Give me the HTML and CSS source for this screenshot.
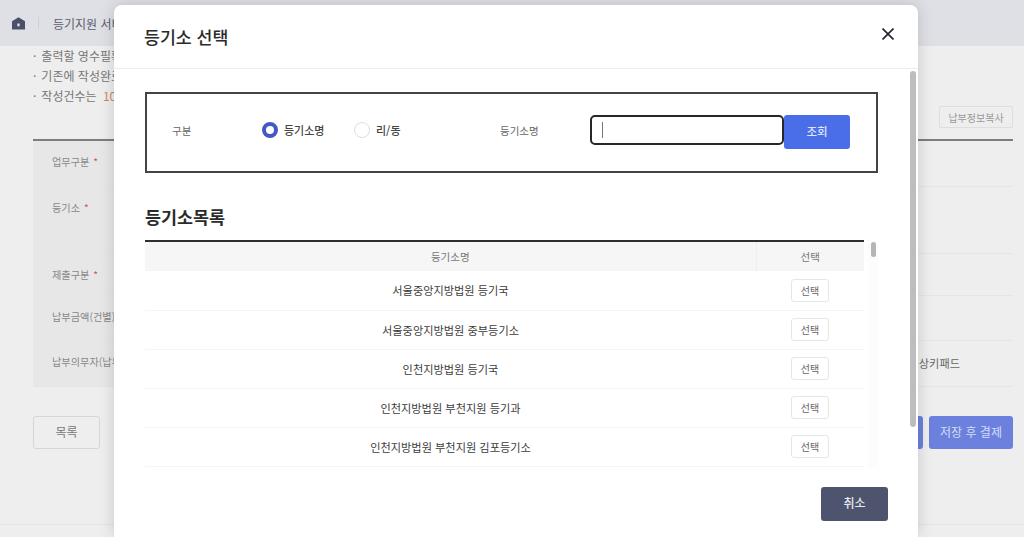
FILE: index.html
```html
<!DOCTYPE html>
<html lang="ko">
<head>
<meta charset="utf-8">
<title>등기소 선택</title>
<link rel="stylesheet" href="styles.css">
</head>
<body>
<div class="page">
  <header class="topbar">
    <svg class="home" viewBox="0 0 16 14" width="15" height="13"><path d="M8 0.3 L15 4.6 V13.4 H1 V4.6 Z" fill="#4b5068"/><rect x="6.8" y="7" width="2.4" height="3" fill="#e6e7ec"/></svg>
    <span class="sep"></span>
    <span class="crumb">등기지원 서비스</span>
  </header>
  <ul class="notes">
    <li>출력할 영수필확인서를 선택하세요.</li>
    <li>기존에 작성완료된 내역입니다.</li>
    <li>작성건수는 <em>10</em>건입니다.</li>
  </ul>
  <div class="copy-row"><button class="copy">납부정보복사</button></div>
  <div class="form">
    <div class="frow h46"><div class="lab">업무구분 <i>*</i></div><div class="val"></div></div>
    <div class="frow h67"><div class="lab">등기소 <i>*</i></div><div class="val"></div></div>
    <div class="frow h42"><div class="lab">제출구분 <i>*</i></div><div class="val"></div></div>
    <div class="frow h45"><div class="lab">납부금액(건별)</div><div class="val"></div></div>
    <div class="frow h46"><div class="lab">납부의무자(납부자)</div><div class="val"><span class="keypad">상키패드</span></div></div>
  </div>
  <div class="actions">
    <button class="list-btn">목록</button>
    <div class="right-btns"><button class="save">저장</button><button class="save">저장 후 결제</button></div>
  </div>
  <div class="foot"></div>
</div>

<div class="modal">
  <div class="m-head">
    <h2>등기소 선택</h2>
    <svg class="close" viewBox="0 0 12 12" width="12" height="12"><path d="M0.5 0.5 L11.5 11.5 M11.5 0.5 L0.5 11.5" stroke="#20232e" stroke-width="1.6" fill="none"/></svg>
  </div>
  <div class="m-body">
    <div class="filter">
      <span class="f-label">구분</span>
      <div class="radios">
        <span class="radio"><span class="dot on"></span><span>등기소명</span></span>
        <span class="radio"><span class="dot"></span><span>리/동</span></span>
      </div>
      <span class="f-label name">등기소명</span>
      <div class="input"><span class="caret"></span></div>
      <button class="search">조회</button>
    </div>
    <h3>등기소목록</h3>
    <div class="list-wrap">
      <table class="list">
        <thead><tr><th>등기소명</th><th class="c2">선택</th></tr></thead>
        <tbody>
          <tr><td>서울중앙지방법원 등기국</td><td class="c2"><button class="pick">선택</button></td></tr>
          <tr><td>서울중앙지방법원 중부등기소</td><td class="c2"><button class="pick">선택</button></td></tr>
          <tr><td>인천지방법원 등기국</td><td class="c2"><button class="pick">선택</button></td></tr>
          <tr><td>인천지방법원 부천지원 등기과</td><td class="c2"><button class="pick">선택</button></td></tr>
          <tr><td>인천지방법원 부천지원 김포등기소</td><td class="c2"><button class="pick">선택</button></td></tr>
        </tbody>
      </table>
      <div class="track"><span class="thumb"></span></div>
    </div>
    <div class="m-foot"><button class="cancel">취소</button></div>
    <span class="body-thumb"></span>
  </div>
</div>
</body>
</html>
```
FILE: styles.css
```css
* { box-sizing: border-box; }
html, body { margin: 0; height: 537px; overflow: hidden; }
body { background: #eeeeee; font-family: "Noto Sans CJK KR", "Noto Sans", sans-serif; color: #777; }
button { font-family: inherit; cursor: pointer; }

.page { height: 537px; display: flex; flex-direction: column; overflow: hidden; }
.topbar { height: 46px; background: #dfe0e6; display: flex; align-items: center; padding-left: 11px; flex: none; }
.home { display: block; }
.sep { width: 1px; height: 12px; background: #cfd0d6; margin: 0 14px 0 12px; }
.crumb { font-size: 12px; font-weight: 400; color: #5a5d6e; white-space: nowrap; }

.notes { list-style: none; margin: 0; padding: 0 0 0 33px; font-size: 12px; line-height: 20px; height: 60px; color: #777; white-space: nowrap; flex: none; }
.notes li::before { content: "·"; margin-right: 5px; }
.notes em { font-style: normal; color: #c88a5c; margin-left: 3px; }

.copy-row { display: flex; justify-content: flex-end; padding-right: 11px; height: 33px; flex: none; }
.copy { width: 74px; height: 22px; padding: 0; background: #eeeeee; border: 1px solid #dedede; border-radius: 2px; font-size: 10px; color: #999; white-space: nowrap; }

.form { margin: 0 11px 0 33px; border-top: 2px solid #7d7d7d; flex: none; }
.frow { display: flex; border-bottom: 1px solid #e6e6e6; }
.h46 { height: 46px; }
.h67 { height: 67px; }
.h42 { height: 42px; }
.h45 { height: 45px; }
.lab { width: 160px; background: #e7e7e7; padding: 13px 0 0 19px; font-size: 10.2px; line-height: 16px; color: #888; white-space: nowrap; }
.lab i { font-style: normal; color: #c9565c; margin-left: 1px; }
.val { flex: 1; display: flex; align-items: center; justify-content: flex-end; padding: 0 53px 2px 0; }
.keypad { font-size: 11.2px; color: #666; }

.actions { display: flex; justify-content: space-between; padding: 29px 11px 0 33px; flex: none; }
.list-btn { width: 67px; height: 33px; background: #eeeeee; border: 1px solid #d6d6d6; border-radius: 3px; font-size: 12px; color: #777; padding: 0 0 2px; }
.right-btns { display: flex; gap: 6px; }
.save { width: 84px; height: 33px; padding: 0 0 3px; background: #6b81dd; border: 0; border-radius: 3px; color: #d5dcf6; font-size: 12px; white-space: nowrap; }
.foot { margin-top: 75px; border-top: 1px solid #e4e4e4; flex: none; }

.modal { position: absolute; left: 114px; top: 5px; bottom: 0; width: 804px; background: #fff; border-radius: 8px 8px 0 0; box-shadow: 0 0 16px rgba(0,0,0,.16); display: flex; flex-direction: column; overflow: hidden; }
.m-head { height: 64px; border-bottom: 1px solid #ededed; display: flex; align-items: flex-start; justify-content: space-between; padding: 18px 24px 0 30px; flex: none; }
.m-head h2 { margin: 0; font-size: 17.3px; line-height: 28px; font-weight: 500; color: #2b2b2b; }
.close { margin-top: 5px; }
.m-body { position: relative; padding: 23px 0 0 31px; flex: 1; min-height: 0; }
.body-thumb { position: absolute; left: 796px; top: 2px; width: 6px; height: 356px; background: #bdbdbd; border-radius: 3px; }

.filter { width: 733px; height: 81px; border: 2px solid #444; display: flex; align-items: center; padding: 0 0 5px 25px; }
.f-label { font-size: 10.5px; color: #666; width: 90px; flex: none; }
.radios { display: flex; width: 238px; flex: none; }
.radio { display: flex; align-items: center; gap: 6px; font-size: 11px; font-weight: 500; color: #444; width: 92px; }
.dot { width: 16px; height: 16px; border-radius: 50%; border: 1px solid #ddd; background: #fff; flex: none; }
.dot.on { border: 4.5px solid #4458c4; }
.f-label.name { width: 90px; }
.input { width: 194px; height: 30px; border: 2px solid #26262b; border-radius: 5px; display: flex; align-items: center; padding-left: 10px; }
.caret { width: 1px; height: 16px; background: #777; }
.search { width: 66px; height: 34px; margin-top: 4px; background: #4a6ee8; color: #dfe6fb; border: 0; border-radius: 3px; font-size: 11.5px; font-weight: 500; padding: 0 0 3px; }

h3 { margin: 31px 0 0; font-size: 17.4px; line-height: 25px; font-weight: 700; color: #2b2b2b; }
.list-wrap { display: flex; margin-top: 11px; height: 227px; overflow: hidden; }
.list { width: 719px; border-collapse: collapse; table-layout: fixed; border-top: 2px solid #2f2f2f; align-self: flex-start; }
.list th { height: 30px; padding: 0; background: #f6f6f6; font-size: 10.5px; font-weight: 400; color: #777; }
.list th.c2 { border-left: 1px solid #eeeeee; }
.list td { height: 39px; padding: 0; border-bottom: 1px solid #f5f5f5; text-align: center; font-size: 11.2px; color: #3c3c3c; }
.c2 { width: 108px; }
.pick { width: 38px; height: 23px; padding: 0; background: #fff; border: 1px solid #e6e6e6; border-radius: 3px; font-size: 10px; color: #666; display: block; margin: 0 auto; }
.track { width: 10px; margin-left: 4px; background: #fcfcfc; flex: none; }
.thumb { display: block; width: 5px; height: 15px; margin: 2px 0 0 3px; background: #b5b5b5; border-radius: 3px; }

.m-foot { width: 743px; display: flex; justify-content: flex-end; padding-top: 20px; }
.cancel { width: 67px; height: 34px; padding: 0 0 3px; background: #4f546e; color: #e8e9ee; border: 0; border-radius: 3px; font-size: 12px; font-weight: 500; }
```
